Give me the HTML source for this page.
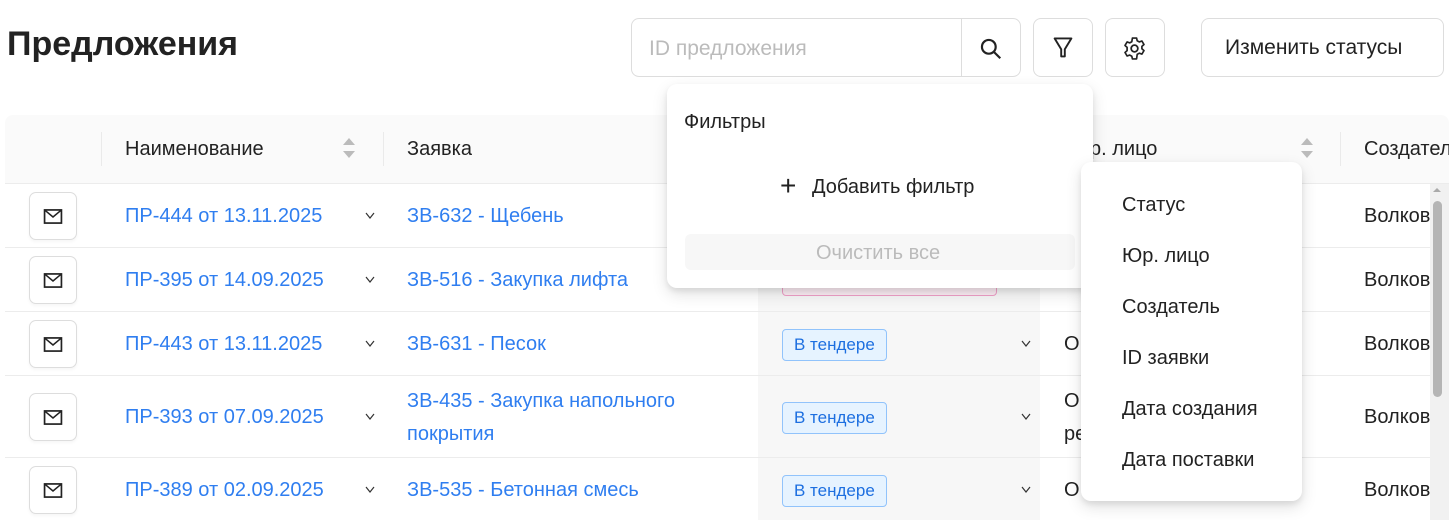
<!DOCTYPE html>
<html><head><meta charset="utf-8"><style>
*{box-sizing:border-box;margin:0;padding:0}
body{width:1449px;height:520px;overflow:hidden;background:#fff;font-family:"Liberation Sans","Noto Sans CJK SC",sans-serif;color:#222;position:relative}
.a{position:absolute}
.t{font-size:20px;white-space:nowrap}
.link{color:#2f7ef0}
.btn{position:absolute;border:1px solid #ddd;border-radius:8px;background:#fff}
.row{position:absolute;left:5px;width:1425px;border-bottom:1px solid #ececec}
.mail{position:absolute;left:29px;width:48px;height:48px;border:1px solid #ddd;border-radius:7px;background:#fff;box-shadow:0 2px 3px rgba(0,0,0,.04)}
.chev{position:absolute;width:10px;height:7px}
.tag{position:absolute;left:782px;height:32px;width:105px;border:1px solid #91c3fb;background:#e6f3ff;border-radius:4px;color:#1d6fe0;font-size:17px;line-height:30px;padding-left:11px}
.v{position:absolute;left:1364px;font-size:20px}
</style></head><body>
<svg width="0" height="0" style="position:absolute"><defs><symbol id="m" viewBox="0 0 20 16"><rect x="1" y="1" width="18" height="14" fill="none" stroke="#222" stroke-width="1.8"/><path d="M1 1 L10 8.5 L19 1" fill="none" stroke="#222" stroke-width="1.6"/></symbol><symbol id="c" viewBox="0 0 10 7"><path d="M1 1 L5 6 L9 1" fill="none" stroke="#333" stroke-width="1.2"/></symbol></defs></svg>
<div class="a" style="left:7px;top:25px;font-size:34px;font-weight:bold;color:#222">Предложения</div>

<div class="btn" style="left:631px;top:18px;width:390px;height:59px"></div>
<div class="a" style="left:961px;top:19px;width:1px;height:57px;background:#ddd"></div>
<div class="a t" style="left:649px;top:37px;color:#bbb;font-size:21px">ID предложения</div>
<svg class="a" style="left:979px;top:37px" width="24" height="24" viewBox="0 0 22 22"><circle cx="9" cy="9" r="6.3" fill="none" stroke="#222" stroke-width="2"/><path d="M13.5 13.5 L19.5 19.5" stroke="#222" stroke-width="2"/></svg>
<div class="btn" style="left:1033px;top:18px;width:60px;height:59px"></div>
<svg class="a" style="left:1051px;top:36px" width="24" height="24" viewBox="0 0 20 20"><path d="M3 2 H17 L11.5 11 V17 H8.5 V11 Z" fill="none" stroke="#222" stroke-width="1.6" stroke-linejoin="round"/></svg>
<div class="btn" style="left:1105px;top:18px;width:60px;height:59px"></div>
<svg class="a" style="left:1122px;top:36px" width="25" height="25" viewBox="0 0 24 24"><circle cx="12" cy="12" r="3.2" fill="none" stroke="#222" stroke-width="1.7"/><path d="M10 2h4l.6 2.6 2 1.1 2.5-.9 2 3.4-2 1.8v2.2l2 1.8-2 3.4-2.5-.9-2 1.1L14 22h-4l-.6-2.6-2-1.1-2.5.9-2-3.4 2-1.8V10.9l-2-1.8 2-3.4 2.5.9 2-1.1z" fill="none" stroke="#222" stroke-width="1.6" stroke-linejoin="round"/></svg>
<div class="btn" style="left:1201px;top:18px;width:243px;height:59px"></div>
<div class="a" style="left:1225px;top:36px;font-size:21px">Изменить статусы</div>

<div class="a" style="left:5px;top:115px;width:1444px;height:69px;background:#fafafa;border-radius:8px 8px 0 0;border-bottom:1px solid #ececec"></div>
<div class="a" style="left:758px;top:115px;width:282px;height:405px;background:#f7f7f7"></div>
<div class="a" style="left:101px;top:132px;width:1px;height:34px;background:#eaeaea"></div>
<div class="a" style="left:383px;top:132px;width:1px;height:34px;background:#eaeaea"></div>
<div class="a" style="left:1340px;top:132px;width:1px;height:34px;background:#eaeaea"></div>
<div class="a t" style="left:125px;top:138px">Наименование</div>
<div class="a" style="left:343px;top:138px;width:0;height:0;border:6px solid transparent;border-bottom:7px solid #bbb;border-top:0"></div>
<div class="a" style="left:343px;top:151px;width:0;height:0;border:6px solid transparent;border-top:7px solid #bbb;border-bottom:0"></div>
<div class="a t" style="left:407px;top:138px">Заявка</div>
<div class="a t" style="left:1090px;top:138px">р. лицо</div>
<div class="a" style="left:1301px;top:138px;width:0;height:0;border:6px solid transparent;border-bottom:7px solid #bbb;border-top:0"></div>
<div class="a" style="left:1301px;top:151px;width:0;height:0;border:6px solid transparent;border-top:7px solid #bbb;border-bottom:0"></div>
<div class="a t" style="left:1364px;top:138px">Создатель</div>

<div class="row" style="top:184px;height:64px"></div>
<div class="row" style="top:248px;height:64px"></div>
<div class="row" style="top:312px;height:64px"></div>
<div class="row" style="top:376px;height:82px"></div>

<div class="mail" style="top:192px"></div><svg class="a" style="left:43px;top:209px" width="20" height="15"><use href="#m"/></svg>
<div class="mail" style="top:256px"></div><svg class="a" style="left:43px;top:273px" width="20" height="15"><use href="#m"/></svg>
<div class="mail" style="top:320px"></div><svg class="a" style="left:43px;top:337px" width="20" height="15"><use href="#m"/></svg>
<div class="mail" style="top:393px"></div><svg class="a" style="left:43px;top:410px" width="20" height="15"><use href="#m"/></svg>
<div class="mail" style="top:466px"></div><svg class="a" style="left:43px;top:483px" width="20" height="15"><use href="#m"/></svg>

<div class="a t link" style="left:125px;top:205px">ПР-444 от 13.11.2025</div>
<div class="a t link" style="left:125px;top:269px">ПР-395 от 14.09.2025</div>
<div class="a t link" style="left:125px;top:333px">ПР-443 от 13.11.2025</div>
<div class="a t link" style="left:125px;top:406px">ПР-393 от 07.09.2025</div>
<div class="a t link" style="left:125px;top:479px">ПР-389 от 02.09.2025</div>
<svg class="chev" style="left:365px;top:212px"><use href="#c"/></svg>
<svg class="chev" style="left:365px;top:276px"><use href="#c"/></svg>
<svg class="chev" style="left:365px;top:340px"><use href="#c"/></svg>
<svg class="chev" style="left:365px;top:413px"><use href="#c"/></svg>
<svg class="chev" style="left:365px;top:486px"><use href="#c"/></svg>

<div class="a t link" style="left:407px;top:205px">ЗВ-632 - Щебень</div>
<div class="a t link" style="left:407px;top:269px">ЗВ-516 - Закупка лифта</div>
<div class="a t link" style="left:407px;top:333px">ЗВ-631 - Песок</div>
<div class="a t link" style="left:407px;top:390px">ЗВ-435 - Закупка напольного</div>
<div class="a t link" style="left:407px;top:423px">покрытия</div>
<div class="a t link" style="left:407px;top:479px">ЗВ-535 - Бетонная смесь</div>

<div class="a" style="left:782px;top:264px;width:215px;height:32px;border:1px solid #f0a0c8;background:#fdeef5;border-radius:4px"></div>
<div class="tag" style="top:329px">В тендере</div>
<div class="tag" style="top:402px">В тендере</div>
<div class="tag" style="top:475px">В тендере</div>
<svg class="chev" style="left:1021px;top:340px"><use href="#c"/></svg>
<svg class="chev" style="left:1021px;top:413px"><use href="#c"/></svg>
<svg class="chev" style="left:1021px;top:486px"><use href="#c"/></svg>
<div class="a t" style="left:1064px;top:333px">О</div>
<div class="a t" style="left:1064px;top:390px">О</div>
<div class="a t" style="left:1064px;top:423px">ре</div>
<div class="a t" style="left:1064px;top:479px">О</div>

<div class="v" style="top:205px">Волков</div>
<div class="v" style="top:269px">Волков</div>
<div class="v" style="top:333px">Волков</div>
<div class="v" style="top:406px">Волков</div>
<div class="v" style="top:479px">Волков</div>
<div class="a" style="left:1430px;top:184px;width:19px;height:336px;background:#f1f1f1"></div>
<div class="a" style="left:1433px;top:201px;width:9px;height:196px;background:#b5b5b5;border-radius:5px"></div>
<div class="a" style="left:1433px;top:188px;width:0;height:0;border:4px solid transparent;border-bottom:4px solid #aaa;border-top:0"></div>

<div class="a" style="left:667px;top:84px;width:426px;height:204px;background:#fff;border-radius:10px;box-shadow:0 6px 16px rgba(0,0,0,.12),0 3px 6px rgba(0,0,0,.08)"></div>
<div class="a t" style="left:684px;top:111px">Фильтры</div>
<div class="a" style="left:780px;top:170px;font-size:28px;font-weight:300">+</div>
<div class="a t" style="left:812px;top:176px">Добавить фильтр</div>
<div class="a" style="left:685px;top:234px;width:390px;height:36px;background:#f7f7f7;border-radius:6px"></div>
<div class="a t" style="left:816px;top:242px;color:#bbb">Очистить все</div>

<div class="a" style="left:1081px;top:162px;width:221px;height:339px;background:#fff;border-radius:10px;box-shadow:0 6px 16px rgba(0,0,0,.12),0 3px 6px rgba(0,0,0,.08)"></div>
<div class="a t" style="left:1122px;top:194px">Статус</div>
<div class="a t" style="left:1122px;top:245px">Юр. лицо</div>
<div class="a t" style="left:1122px;top:296px">Создатель</div>
<div class="a t" style="left:1122px;top:347px">ID заявки</div>
<div class="a t" style="left:1122px;top:398px">Дата создания</div>
<div class="a t" style="left:1122px;top:449px">Дата поставки</div>
</body></html>
